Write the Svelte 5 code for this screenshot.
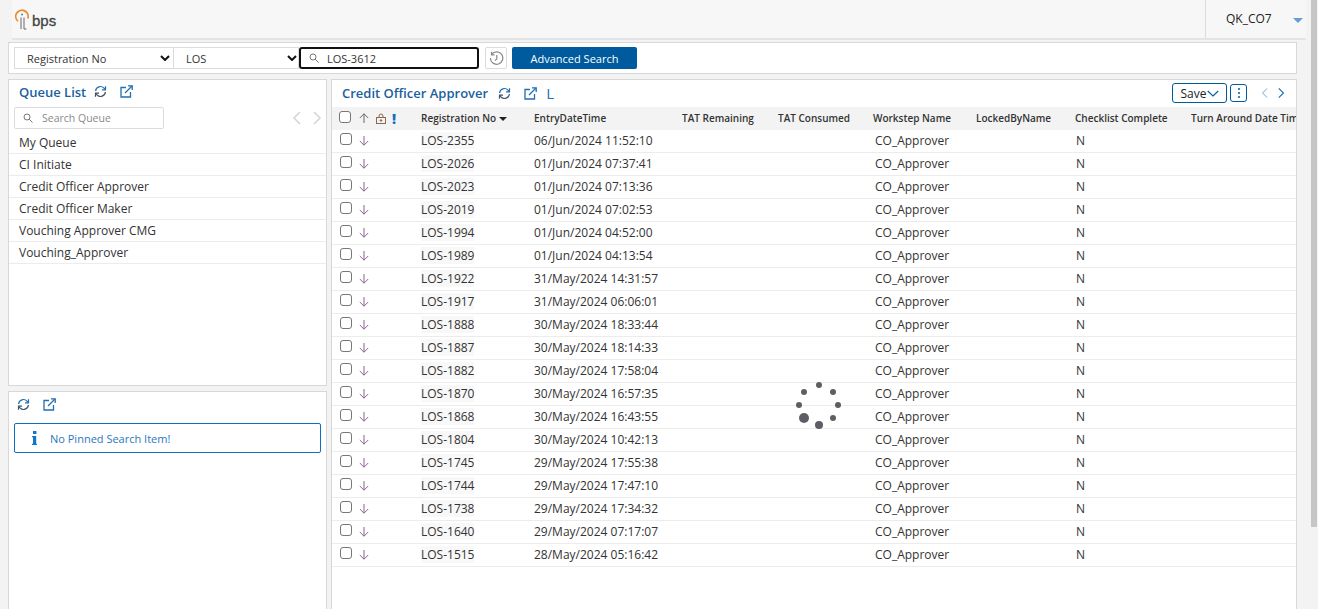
<script>
  const queues = ['My Queue','CI Initiate','Credit Officer Approver','Credit Officer Maker','Vouching Approver CMG','Vouching_Approver'];
  const rows = [
    ['LOS-2355','06/Jun/2024 11:52:10'],['LOS-2026','01/Jun/2024 07:37:41'],['LOS-2023','01/Jun/2024 07:13:36'],
    ['LOS-2019','01/Jun/2024 07:02:53'],['LOS-1994','01/Jun/2024 04:52:00'],['LOS-1989','01/Jun/2024 04:13:54'],
    ['LOS-1922','31/May/2024 14:31:57'],['LOS-1917','31/May/2024 06:06:01'],['LOS-1888','30/May/2024 18:33:44'],
    ['LOS-1887','30/May/2024 18:14:33'],['LOS-1882','30/May/2024 17:58:04'],['LOS-1870','30/May/2024 16:57:35'],
    ['LOS-1868','30/May/2024 16:43:55'],['LOS-1804','30/May/2024 10:42:13'],['LOS-1745','29/May/2024 17:55:38'],
    ['LOS-1744','29/May/2024 17:47:10'],['LOS-1738','29/May/2024 17:34:32'],['LOS-1640','29/May/2024 07:17:07'],
    ['LOS-1515','28/May/2024 05:16:42']
  ];
  const dots = [
    [819,385,3],[833,392,3],[804,392,3],[799,405,3],[838,405,3],[804,418,5],[833,418,3],[819,425,4]
  ];
</script>

{#snippet refresh(cls)}
  <svg class={cls} width="13" height="13" viewBox="0 0 13 13" fill="none" stroke="#1f6fb2" stroke-width="1.2">
    <path d="M1.6 6A4.8 4.8 0 0 1 10 3.2l1 1.2"/><path d="M11.5 1.2v3.6H8"/>
    <path d="M11.4 7A4.8 4.8 0 0 1 3 9.8L2 8.6" stroke="#3d5266"/><path d="M1.5 11.8V8.2H5" stroke="#3d5266"/>
  </svg>
{/snippet}
{#snippet popout()}
  <svg width="13" height="13" viewBox="0 0 13 13" fill="none" stroke="#1f6fb2" stroke-width="1.3">
    <path d="M6 2.5H1v9.5h9.5V7"/><path d="M5 8l7-7"/><path d="M8 .8h4.2V5"/>
  </svg>
{/snippet}
{#snippet search(color)}
  <svg class="mag" width="10" height="10" viewBox="0 0 10 10" fill="none" stroke={color} stroke-width="1">
    <circle cx="4" cy="4" r="3"/><path d="M6.2 6.2L9.5 9.5"/>
  </svg>
{/snippet}
{#snippet chevrons(left, right)}
  <svg width="9" height="14" viewBox="0 0 9 14" fill="none" stroke={left} stroke-width="1.5"><path d="M8 1L2 7l6 6"/></svg>
  <svg width="9" height="14" viewBox="0 0 9 14" fill="none" stroke={right} stroke-width="1.5"><path d="M1 1l6 6-6 6"/></svg>
{/snippet}
{#snippet selectArrow()}
  <svg width="10" height="6" viewBox="0 0 10 6" fill="none" stroke="#111" stroke-width="2"><path d="M1 1l4 4 4-4"/></svg>
{/snippet}

<div class="page">
  <div class="content">
    <header class="topbar">
      <div class="logo">
        <svg width="16" height="21" viewBox="0 0 16 21" fill="none">
          <path d="M3 12.2A6.2 6.2 0 1 1 12.8 9.5" stroke="#ee8a2c" stroke-width="1.7"/>
          <circle cx="7" cy="5.6" r="1" fill="#3d9a7a"/>
          <path d="M6 8.5v11.5M9 8.5v11.5h2.4" stroke="#666" stroke-width="1"/>
        </svg>
        <span>bps</span>
      </div>
      <div class="user">
        <span>QK_CO7</span>
        <i class="caret"></i>
      </div>
    </header>

    <section class="searchbar">
      <div class="sel first">Registration No {@render selectArrow()}</div>
      <div class="sel second">LOS {@render selectArrow()}</div>
      <div class="searchbox">{@render search('#777')}<span>LOS-3612</span></div>
      <button class="history" aria-label="history">
        <svg width="15" height="15" viewBox="0 0 15 15" fill="none" stroke="#888" stroke-width="1.2">
          <path d="M2.6 3.4A6.2 6.2 0 1 1 1.4 7"/><path d="M2.5 .8v3h3"/><path d="M7.8 4v4l-2 1.6"/>
        </svg>
      </button>
      <button class="advanced">Advanced Search</button>
    </section>

    <div class="columns">
      <aside class="left">
        <section class="panel queue">
          <div class="panel-title">
            <h2>Queue List</h2>
            {@render refresh('r1')}
            {@render popout()}
          </div>
          <div class="queue-tools">
            <div class="queue-search">{@render search('#777')}<span>Search Queue</span></div>
            <div class="pager">{@render chevrons('#d4d4d4','#d4d4d4')}</div>
          </div>
          <ul>
            {#each queues as q}<li>{q}</li>{/each}
          </ul>
        </section>
        <section class="panel pinned">
          <div class="pinned-tools">
            {@render refresh('r2')}
            {@render popout()}
          </div>
          <div class="notice">
            <svg width="5" height="14" viewBox="0 0 5 14" fill="#1277c9"><rect x="1" y="0" width="3.4" height="3"/><path d="M0 5h4.2v7.8H5V14H0v-1.2h1V6.2H0z"/></svg>
            <span>No Pinned Search Item!</span>
          </div>
        </section>
      </aside>

      <main class="panel grid-panel">
        <div class="grid-title">
          <h2>Credit Officer Approver</h2>
          {@render refresh('r1')}
          {@render popout()}
          <span class="ell">L</span>
          <div class="grid-actions">
            <button class="save">Save
              <svg width="12" height="7" viewBox="0 0 13 7" fill="none" stroke="#005a9e" stroke-width="1.2"><path d="M.8.8l5.7 5.4L12.2.8"/></svg>
            </button>
            <button class="kebab" aria-label="more"><i></i><i></i><i></i></button>
            <div class="pager dark">{@render chevrons('#a9c7e0','#1f6fb2')}</div>
          </div>
        </div>

        <div class="row head">
          <div class="tools">
            <span class="check"></span>
            <svg class="arrow" width="10" height="10" viewBox="0 0 10 10" fill="none" stroke="#666" stroke-width="1"><path d="M5 10V.8M.8 5L5 .8 9.2 5"/></svg>
            <svg class="lock" width="10" height="11" viewBox="0 0 10 11" fill="none" stroke="#8a6a50" stroke-width="1"><path d="M3 4.5V3a2 2 0 0 1 4 0v1.5"/><rect x=".5" y="4.5" width="9" height="6"/><circle cx="5" cy="7.5" r=".8" fill="#8a6a50"/></svg>
            <b class="bang">!</b>
          </div>
          <div class="sorted">Registration No<i class="sort"></i></div>
          <div>EntryDateTime</div>
          <div>TAT Remaining</div>
          <div>TAT Consumed</div>
          <div>Workstep Name</div>
          <div>LockedByName</div>
          <div>Checklist Complete</div>
          <div class="clip">Turn Around Date Time</div>
        </div>

        {#each rows as r}
          <div class="row body">
            <div class="tools">
              <span class="check"></span>
              <svg class="arrow" width="10" height="10" viewBox="0 0 10 10" fill="none" stroke="#8f5f98" stroke-width="1"><path d="M5 0v9.2M.8 5L5 9.2 9.2 5"/></svg>
            </div>
            <div><span class="reg">{r[0]}</span></div>
            <div>{r[1]}</div>
            <div></div>
            <div></div>
            <div>CO_Approver</div>
            <div></div>
            <div class="flag">N</div>
            <div></div>
          </div>
        {/each}
      </main>
    </div>
  </div>
  <div class="scroll"><div class="thumb"></div></div>

  <div class="spinner" aria-hidden="true">
    {#each dots as d}
      <i style="left:{d[0]-d[2]}px;top:{d[1]-d[2]}px;width:{d[2]*2}px;height:{d[2]*2}px"></i>
    {/each}
  </div>
</div>

<style>
  :global(body) {
    margin: 0;
    background: #f3f3f3;
    font-family: "Open Sans", "Noto Sans", sans-serif;
    font-size: 12px;
    color: #333;
  }
  button { font-family: inherit; padding: 0; cursor: pointer; }
  h2 { margin: 0; font-size: 13px; font-weight: 600; color: #1a5f9e; }
  ul { list-style: none; margin: 0; padding: 0; }

  .page { position: relative; display: flex; width: 1318px; height: 609px; overflow: hidden; }
  .content { width: 1289px; margin-left: 8px; flex: none; display: flex; flex-direction: column; }
  .scroll { margin-left: 14px; width: 6px; height: 609px; }
  .thumb { width: 6px; height: 527px; background: #c6c6c6; }

  .topbar {
    height: 40px; box-sizing: border-box; margin-left: 4px; margin-right: -9px; flex: none;
    display: flex; justify-content: space-between; align-items: stretch;
    background: #f7f7f7; border-bottom: 2px solid #e4e4e4;
  }
  .logo { display: flex; align-items: flex-start; padding-left: 3px; padding-top: 9px; }
  .logo span {
    font-family: "Liberation Sans", sans-serif; font-size: 15px; color: #444; margin-left: 1px; margin-top: 4px; line-height: 16px;
    -webkit-text-stroke: .3px #444;
  }
  .user {
    width: 101px; box-sizing: border-box; border-left: 1px solid #dcdcdc;
    display: flex; align-items: flex-start; padding-top: 10px; padding-left: 20px; color: #222; gap: 21px;
  }
  .caret { margin-top: 8px; border-left: 5px solid transparent; border-right: 5px solid transparent; border-top: 5px solid #6b9bd0; }

  .panel { background: #fff; border: 1px solid #d8d8d8; box-sizing: border-box; }

  .searchbar {
    height: 32px; margin-top: 2px; flex: none; background: #fff; border: 1px solid #d8d8d8; box-sizing: border-box;
    display: flex; align-items: center; padding-left: 5px;
  }
  .sel {
    height: 22px; box-sizing: border-box; border: 1px solid #dcdcdc;
    display: flex; align-items: center; justify-content: space-between;
    font-size: 11px; color: #333;
  }
  .sel svg { margin-right: 3px; }
  .first { width: 159px; padding-left: 12px; border-right: 0; }
  .second { width: 126px; padding-left: 12px; }
  .second svg { margin-right: 1px; }
  .searchbox {
    width: 180px; height: 22px; box-sizing: border-box; border: 2px solid #111; border-radius: 3px;
    display: flex; align-items: center; font-size: 11px; color: #333; padding-left: 8px; gap: 8px;
  }
  .history {
    width: 22px; height: 22px; margin-left: 6px; background: #fff; border: 1px solid #dcdcdc; border-radius: 2px;
    display: flex; align-items: center; justify-content: center;
  }
  .advanced {
    width: 125px; height: 22px; margin-left: 5px; background: #005a9e; color: #fff; border: 0; border-radius: 2px; font-size: 11px; font-weight: 400;
  }

  .columns { flex: 1; min-height: 0; display: flex; gap: 4px; margin-top: 5px; margin-bottom: -2px; }
  .left { width: 319px; flex: none; display: flex; flex-direction: column; gap: 5px; }
  .queue { height: 307px; padding: 4px 0 0 5px; }
  .panel-title { display: flex; align-items: center; height: 15px; padding-left: 5px; }
  .panel-title :global(.r1) { margin-left: 8px; margin-right: 13px; }
  .queue-tools { display: flex; justify-content: space-between; align-items: center; margin-top: 8px; padding-right: 4px; }
  .queue-search {
    width: 150px; height: 22px; box-sizing: border-box; border: 1px solid #dcdcdc; border-radius: 2px;
    display: flex; align-items: center; padding-left: 8px; gap: 9px; font-size: 10.5px; color: #8a8a8a;
  }
  .pager { display: flex; gap: 12px; align-items: center; }
  .queue ul { margin-top: 3px; margin-left: -5px; }
  .queue li {
    height: 22px; box-sizing: border-box; padding-left: 10px; line-height: 21px; font-size: 12px;
    border-bottom: 1px solid #ececec; color: #333;
  }

  .pinned { flex: 1; padding: 5px; }
  .pinned-tools { display: flex; align-items: center; height: 14px; padding-left: 3px; }
  .pinned-tools :global(.r2) { margin-right: 13px; }
  .notice {
    margin-top: 12px; height: 30px; box-sizing: border-box;
    border: 1px solid #0f6fbe; border-radius: 2px;
    display: flex; align-items: center; padding-left: 17px; gap: 13px;
    font-size: 11px; color: #2a78bd;
  }

  .grid-panel { flex: 1; min-width: 0; overflow: hidden; }
  .grid-title { height: 27px; display: flex; align-items: center; padding-left: 10px; padding-bottom: 1px; box-sizing: border-box; }
  .grid-title :global(.r1) { margin-left: 10px; margin-right: 13px; }
  .ell { margin-left: 9px; font-size: 15px; line-height: 15px; color: #1f6fb2; }
  .grid-actions { margin-left: auto; display: flex; align-items: center; padding-right: 11px; }
  .save {
    width: 55px; height: 20px; box-sizing: border-box; background: #fff; border: 1px solid #005a9e; border-radius: 3px;
    display: flex; align-items: center; justify-content: center; gap: 1px; padding-left: 1px; font-size: 12px; color: #222;
  }
  .kebab {
    width: 17px; height: 18px; margin-left: 3px; background: #fff; border: 1px solid #005a9e; border-radius: 3px;
    display: flex; flex-direction: column; align-items: center; justify-content: center; gap: 2px;
  }
  .kebab i { width: 2px; height: 2px; background: #005a9e; border-radius: 50%; }
  .dark { margin-left: 14px; gap: 10px; }
  .dark :global(svg) { width: 7px; height: 12px; }

  .row {
    display: grid;
    grid-template-columns: 89px 113px 148px 96px 95px 103px 99px 116px 110px;
    height: 23px; align-items: center; white-space: nowrap;
  }
  .head { background: #f3f3f3; font-size: 10px; font-weight: 600; color: #333; }
  .head > div:not(.tools) { padding-bottom: 1px; }
  .head .arrow, .head .lock { margin-top: -1px; }
  .body { border-bottom: 1px solid #ececec; box-sizing: border-box; font-size: 12px; color: #333; }
  .body > div:not(.tools) { padding-bottom: 1px; }
  .body > div:nth-child(6) { padding-left: 2px; }
  .body > .flag { padding-left: 1px; }
  .clip { overflow: hidden; }

  .tools { height: 100%; display: flex; align-items: center; padding-left: 7px; box-sizing: border-box; }
  .body .tools { padding-left: 8px; }
  .body .arrow { margin-left: 7px; }
  .check { width: 12px; height: 12px; box-sizing: border-box; border: 1px solid #777; border-radius: 3px; background: #fff; margin-top: -4px; flex: none; }
  .arrow { margin-left: 8px; flex: none; }
  .lock { margin-left: 7px; flex: none; }
  .bang { margin-left: 6px; color: #0f6fbe; font-size: 14px; font-weight: 800; line-height: 12px; }
  .reg { background: #f8f8f8; }
  .sorted { display: flex; align-items: center; gap: 3px; }
  .sort { border-left: 4px solid transparent; border-right: 4px solid transparent; border-top: 4px solid #222; margin-top: 1px; }

  .spinner { position: absolute; left: 0; top: 0; width: 0; height: 0; }
  .spinner i { position: absolute; background: #5d5d63; border-radius: 50%; }
</style>
